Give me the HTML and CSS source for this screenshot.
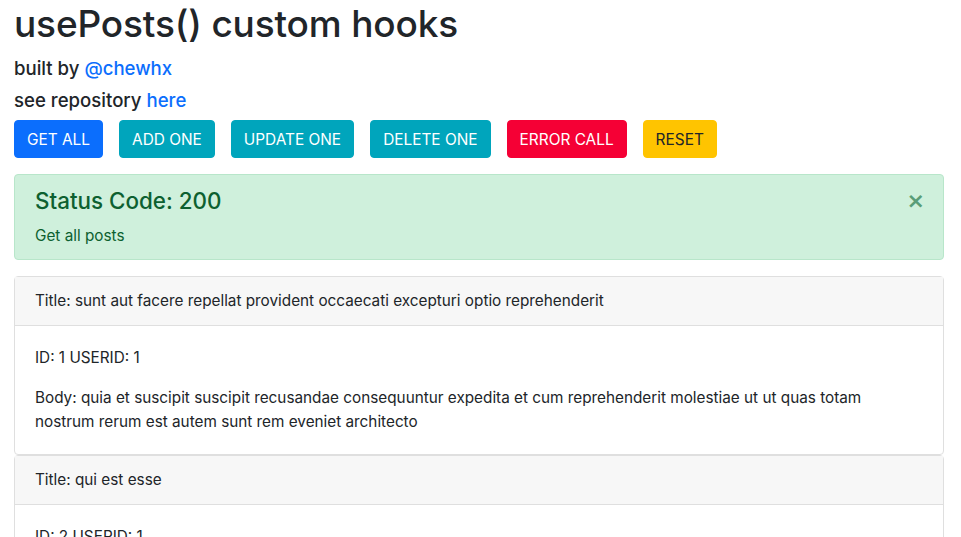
FILE: index.html
```html
<!DOCTYPE html>
<html lang="en">
<head>
<meta charset="utf-8">
<title>usePosts() custom hooks</title>
<link rel="stylesheet" href="styles.css">
</head>
<body>
<div class="page">
  <h1 class="title">usePosts() custom hooks</h1>
  <h5 class="sub">built by <a href="#">@chewhx</a></h5>
  <h5 class="sub">see repository <a href="#">here</a></h5>
  <div class="actions">
    <button class="btn btn-primary">GET ALL</button>
    <button class="btn btn-info">ADD ONE</button>
    <button class="btn btn-info">UPDATE ONE</button>
    <button class="btn btn-info">DELETE ONE</button>
    <button class="btn btn-danger">ERROR CALL</button>
    <button class="btn btn-warning">RESET</button>
  </div>
  <div class="alert">
    <h4 class="alert-heading">Status Code: 200</h4>
    <p class="alert-text">Get all posts</p>
    <button class="close" aria-label="Close">×</button>
  </div>
  <div class="posts">
    <div class="card">
      <div class="card-header">Title: sunt aut facere repellat provident occaecati excepturi optio reprehenderit</div>
      <div class="card-body">
        <p>ID: 1 USERID: 1</p>
        <p>Body: quia et suscipit suscipit recusandae consequuntur expedita et cum reprehenderit molestiae ut ut quas totam nostrum rerum est autem sunt rem eveniet architecto</p>
      </div>
    </div>
    <div class="card">
      <div class="card-header">Title: qui est esse</div>
      <div class="card-body">
        <p>ID: 2 USERID: 1</p>
        <p>Body: est rerum tempore vitae sequi sint nihil reprehenderit dolor beatae ea dolores neque fugiat blanditiis voluptate porro vel nihil molestiae ut reiciendis qui aperiam non debitis possimus qui neque nisi nulla</p>
      </div>
    </div>
  </div>
</div>
</body>
</html>
```
FILE: styles.css
```css
* { box-sizing: border-box; }
html, body { margin: 0; padding: 0; }
body {
  font-family: Inter, "Liberation Sans", sans-serif;
  font-size: 15.3px;
  line-height: 1.5;
  color: #212529;
  background: #fff;
}
.page { padding: 0 17px 0 14px; }
.title {
  margin: 0 0 8px;
  font-size: 37px;
  line-height: 48px;
  font-weight: 500;
  letter-spacing: -0.15px;
}
.sub {
  margin: 0 0 8px;
  font-size: 18.6px;
  line-height: 24px;
  font-weight: 500;
}
.sub a { color: #0b6efd; text-decoration: none; }
.actions { display: flex; gap: 16px; margin-bottom: 16px; }
.btn {
  font-family: inherit;
  font-size: 15.4px;
  line-height: 24px;
  padding: 7px 12px 5px;
  border: 1px solid transparent;
  border-radius: 4px;
  color: #fff;
  cursor: pointer;
}
.btn-primary { background: #0b6efd; border-color: #0b6efd; }
.btn-info { background: #00a5bc; border-color: #00a5bc; }
.btn-danger { background: #f50035; border-color: #f50035; }
.btn-warning { background: #ffc400; border-color: #ffc400; color: #212529; }
.alert {
  position: relative;
  padding: 12px 20px;
  margin-bottom: 16px;
  border: 1px solid #b8e6ca;
  border-radius: 4px;
  background: #cff0dc;
  color: #0d6030;
}
.alert-heading {
  margin: 0 0 8px;
  font-size: 22.4px;
  line-height: 28px;
  font-weight: 500;
}
.alert-text { margin: 0; font-size: 15.3px; line-height: 24px; position: relative; top: 1px; }
.close {
  position: absolute;
  top: 0;
  right: 0;
  padding: 10px 18px 10px 20px;
  border: 0;
  background: transparent;
  font-family: "DejaVu Sans", sans-serif;
  font-size: 22px;
  line-height: 32px;
  font-weight: 700;
  color: #5a9d78;
}
.card {
  border: 1px solid #dfdfdf;
  border-radius: 4px;
  background: #fff;
}
.card-header {
  padding: 12px 20px;
  background: #f7f7f7;
  border-bottom: 1px solid #dfdfdf;
  line-height: 24px;
}
.card-body { padding: 20px 24px 20px 20px; }
.card-body p { margin: 0 0 16px; line-height: 24px; }
.card-body p:last-child { margin-bottom: 0; }
```
